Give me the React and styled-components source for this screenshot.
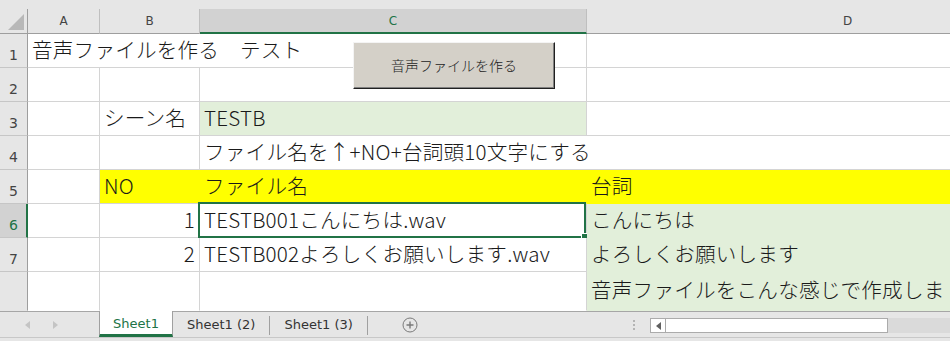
import React from 'react'
import styled, { createGlobalStyle } from 'styled-components'

const GlobalStyle = createGlobalStyle`
    *, *::before, *::after { box-sizing: border-box; }
    html, body { margin:0; padding:0; background:#fff; }
    body { font-family: "Noto Sans CJK JP", sans-serif; }
`

const GREEN = '#217346'
const GRID = '#d4d4d4'

const Window = styled.div`
    position:relative;
    width:950px;
    height:341px;
    overflow:hidden;
    background:#e6e6e6;
    display:flex;
    flex-direction:column;
`

const TopStrip = styled.div`
    height:9px;
    flex:none;
    background:#e6e6e6;
`

const Sheet = styled.div`
    flex:none;
    width:1109px;
    display:grid;
    grid-template-columns:28px 72px 100px 387px 522px;
    grid-template-rows:25px repeat(7, 34px) 39px;
    background:#fff;
`

const Corner = styled.div`
    background:#e6e6e6;
    border-right:1px solid #9e9e9e;
    border-bottom:1px solid #9e9e9e;
    display:flex;
    justify-content:flex-end;
    align-items:flex-end;
    padding:0 3px 3px 0;
`

const ColHead = styled.div`
    background:${p => p.$active ? '#d2d2d2' : '#e6e6e6'};
    border-right:1px solid #bfbfbf;
    border-bottom:${p => p.$active ? `2px solid ${GREEN}` : '1px solid #9e9e9e'};
    display:flex;
    align-items:center;
    justify-content:center;
    padding-top:${p => p.$active ? '1px' : '0'};
    font:12px "DejaVu Sans", sans-serif;
    color:${p => p.$active ? GREEN : '#444'};
`

const RowHead = styled.div`
    background:${p => p.$active ? '#d2d2d2' : '#e6e6e6'};
    border-right:${p => p.$active ? `2px solid ${GREEN}` : '1px solid #9e9e9e'};
    border-bottom:1px solid ${p => p.$last ? '#e6e6e6' : '#c6c6c6'};
    display:flex;
    align-items:flex-end;
    justify-content:center;
    padding:0 0 4px ${p => p.$active ? '1px' : '0'};
    font:14px/16px "DejaVu Sans", sans-serif;
    color:${p => p.$active ? GREEN : '#444'};
`

const Cell = styled.div`
    position:relative;
    grid-column:span ${p => p.$span || 1};
    background:${p => p.$fill || '#fff'};
    border-right:1px solid ${p => p.$noRight ? (p.$fill || '#fff') : GRID};
    border-bottom:1px solid ${p => p.$noBottom ? (p.$fill || '#fff') : GRID};
    display:flex;
    align-items:${p => p.$top ? 'flex-start' : 'center'};
    justify-content:${p => p.$right ? 'flex-end' : 'flex-start'};
    padding:${p => p.$top ? '7px 4px 0' : '0 4px 2px'};
    font-size:20.6px;
    font-weight:300;
    letter-spacing:0.2px;
    line-height:1;
    color:#1a1a1a;
    white-space:nowrap;
`

const Selection = styled.div`
    position:absolute;
    left:-2px;
    top:-2px;
    right:0;
    bottom:-1px;
    border:2px solid ${GREEN};
    pointer-events:none;
`

const Handle = styled.div`
    position:absolute;
    right:-4px;
    bottom:-4px;
    width:7px;
    height:7px;
    background:${GREEN};
    border:1px solid #fff;
`

const MacroButton = styled.button`
    position:absolute;
    left:353px;
    top:42px;
    width:202px;
    height:47px;
    background:#d4d0c8;
    border:1px solid;
    border-color:#f4f4f4 #202020 #202020 #f4f4f4;
    box-shadow:inset -1px -1px 0 #808080;
    font:300 14px "Noto Sans CJK JP", sans-serif;
    color:#222;
    padding:0 0 2px;
`

const TabBar = styled.div`
    flex:1;
    border-top:1px solid #a6a6a6;
    background:#e6e6e6;
`

const TabRow = styled.div`
    height:26px;
    display:flex;
    align-items:stretch;
    border-bottom:1px solid #c8c8c8;
`

const Nav = styled.div`
    width:99px;
    flex:none;
    display:flex;
    align-items:center;
    gap:23px;
    padding-left:25px;
`

const ActiveTab = styled.div`
    margin-top:-1px;
    width:74px;
    background:#fff;
    border-left:1px solid #a0a0a0;
    border-right:1px solid #a0a0a0;
    border-bottom:3px solid ${GREEN};
    display:flex;
    align-items:center;
    justify-content:center;
    padding-top:1px;
    font:13px "DejaVu Sans", sans-serif;
    color:${GREEN};
`

const Tab = styled.div`
    display:flex;
    align-items:center;
    padding:0 14px;
    font:13px "DejaVu Sans", sans-serif;
    color:#333;
`

const Separator = styled.div`
    width:1px;
    margin:4px 0 2px;
    background:#a0a0a0;
`

const AddSheet = styled.div`
    display:flex;
    align-items:center;
    margin-left:34px;
`

const Dots = styled.div`
    margin-left:auto;
    width:16px;
    display:flex;
    flex-direction:column;
    align-items:center;
    justify-content:center;
    gap:2px;
    & span {
        width:2px;
        height:2px;
        background:#b4b4b4;
    }
`

const Scroll = styled.div`
    width:300px;
    margin:6px 0 4px 8px;
    display:flex;
    background:#dadada;
`

const ScrollArrow = styled.div`
    width:16px;
    background:#fff;
    border:1px solid #ababab;
    display:flex;
    align-items:center;
    justify-content:center;
`

const Thumb = styled.div`
    width:222px;
    background:#fff;
    border:1px solid #ababab;
    border-left:none;
`

const cols = ['A', 'B', 'C', 'D']

const rows = [
    [{ span: 3, text: '音声ファイルを作る　テスト' }, {}],
    [{}, {}, {}, {}],
    [{}, { text: 'シーン名' }, { text: 'TESTB', fill: '#e2efda' }, {}],
    [{}, {}, { span: 2, text: 'ファイル名を↑+NO+台詞頭10文字にする' }],
    [{}, { text: 'NO', fill: '#ffff00', noRight: true }, { text: 'ファイル名', fill: '#ffff00', noRight: true }, { text: '台詞', fill: '#ffff00', noRight: true, noBottom: true }],
    [{}, { text: '1', right: true }, { text: 'TESTB001こんにちは.wav', selected: true }, { text: 'こんにちは', fill: '#e2efda', noBottom: true }],
    [{}, { text: '2', right: true }, { text: 'TESTB002よろしくお願いします.wav' }, { text: 'よろしくお願いします', fill: '#e2efda', noBottom: true }],
    [{ noBottom: true }, { noBottom: true }, { noBottom: true }, { text: '音声ファイルをこんな感じで作成しま', fill: '#e2efda', noBottom: true, top: true }],
]

function TriangleLeft({ color }) {
    return (
        <svg width="5" height="8" viewBox="0 0 5 8"><path d="M5 0 L0 4 L5 8 Z" fill={color} /></svg>
    )
}

function TriangleRight({ color }) {
    return (
        <svg width="5" height="8" viewBox="0 0 5 8"><path d="M0 0 L5 4 L0 8 Z" fill={color} /></svg>
    )
}

export default function App() {
    return (
        <Window>
            <GlobalStyle />
            <TopStrip />
            <Sheet>
                <Corner>
                    <svg width="16" height="16" viewBox="0 0 16 16"><path d="M16 0 L16 16 L0 16 Z" fill="#b8b8b8" /></svg>
                </Corner>
                {cols.map(c => <ColHead key={c} $active={c === 'C'}>{c}</ColHead>)}
                {rows.map((row, i) => (
                    <React.Fragment key={i}>
                        <RowHead $active={i === 5} $last={i === 7}>{i < 7 ? i + 1 : ''}</RowHead>
                        {row.map((cell, j) => (
                            <Cell
                                key={j}
                                $span={cell.span}
                                $fill={cell.fill}
                                $noRight={cell.noRight}
                                $noBottom={cell.noBottom}
                                $right={cell.right}
                                $top={cell.top}
                            >
                                {cell.text}
                                {cell.selected && <Selection><Handle /></Selection>}
                            </Cell>
                        ))}
                    </React.Fragment>
                ))}
            </Sheet>
            <MacroButton>音声ファイルを作る</MacroButton>
            <TabBar>
                <TabRow>
                    <Nav>
                        <TriangleLeft color="#c4c4c4" />
                        <TriangleRight color="#c4c4c4" />
                    </Nav>
                    <ActiveTab>Sheet1</ActiveTab>
                    <Tab>Sheet1 (2)</Tab>
                    <Separator />
                    <Tab>Sheet1 (3)</Tab>
                    <Separator />
                    <AddSheet>
                        <svg width="16" height="16" viewBox="0 0 16 16">
                            <circle cx="8" cy="8" r="7" fill="none" stroke="#7a7a7a" strokeWidth="1" />
                            <path d="M8 4.5 V11.5 M4.5 8 H11.5" stroke="#7a7a7a" strokeWidth="1.4" />
                        </svg>
                    </AddSheet>
                    <Dots><span /><span /><span /></Dots>
                    <Scroll>
                        <ScrollArrow><TriangleLeft color="#606060" /></ScrollArrow>
                        <Thumb />
                    </Scroll>
                </TabRow>
            </TabBar>
        </Window>
    )
}
